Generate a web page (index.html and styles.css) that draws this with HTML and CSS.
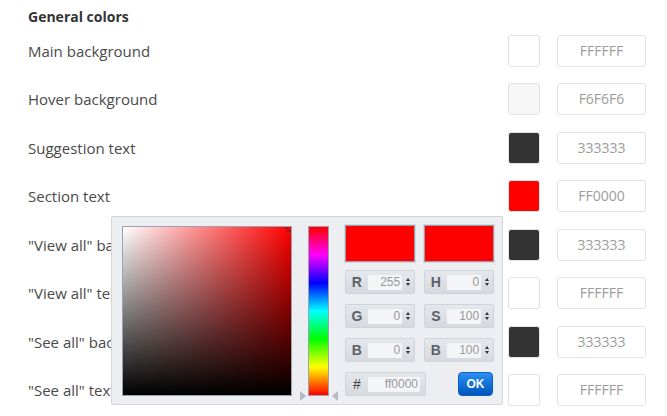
FILE: index.html
```html
<!DOCTYPE html>
<html lang="en">
<head>
<meta charset="utf-8">
<title>General colors</title>
<link rel="stylesheet" href="styles.css">
</head>
<body>
<div class="page">
  <h2 class="heading">General colors</h2>
  <div class="rows">
    <div class="row"><span class="label">Main background</span><span class="swatch" style="background:#FFFFFF"></span><span class="hex">FFFFFF</span></div>
    <div class="row"><span class="label">Hover background</span><span class="swatch" style="background:#F6F6F6"></span><span class="hex">F6F6F6</span></div>
    <div class="row"><span class="label">Suggestion text</span><span class="swatch" style="background:#333333"></span><span class="hex">333333</span></div>
    <div class="row"><span class="label">Section text</span><span class="swatch" style="background:#FF0000"></span><span class="hex">FF0000</span></div>
    <div class="row"><span class="label">"View all" background</span><span class="swatch" style="background:#333333"></span><span class="hex">333333</span></div>
    <div class="row"><span class="label">"View all" text</span><span class="swatch" style="background:#FFFFFF"></span><span class="hex">FFFFFF</span></div>
    <div class="row"><span class="label">"See all" background</span><span class="swatch" style="background:#333333"></span><span class="hex">333333</span></div>
    <div class="row"><span class="label">"See all" text</span><span class="swatch" style="background:#FFFFFF"></span><span class="hex">FFFFFF</span></div>
  </div>

  <div class="picker">
    <div class="sv">
      <span class="sv-handle"></span>
    </div>
    <div class="hue-wrap">
      <div class="hue"></div>
      <span class="arrow arrow-left"></span>
      <span class="arrow arrow-right"></span>
    </div>
    <div class="panel">
      <div class="previews">
        <div class="preview"></div>
        <div class="preview"></div>
      </div>
      <div class="fields">
        <div class="field"><span class="fl">R</span><span class="fv">255</span><span class="spin"><i class="up"></i><i class="down"></i></span></div>
        <div class="field"><span class="fl">H</span><span class="fv">0</span><span class="spin"><i class="up"></i><i class="down"></i></span></div>
        <div class="field"><span class="fl">G</span><span class="fv">0</span><span class="spin"><i class="up"></i><i class="down"></i></span></div>
        <div class="field"><span class="fl">S</span><span class="fv">100</span><span class="spin"><i class="up"></i><i class="down"></i></span></div>
        <div class="field"><span class="fl">B</span><span class="fv">0</span><span class="spin"><i class="up"></i><i class="down"></i></span></div>
        <div class="field"><span class="fl">B</span><span class="fv">100</span><span class="spin"><i class="up"></i><i class="down"></i></span></div>
      </div>
      <div class="bottom">
        <div class="field hexfield"><span class="fl">#</span><span class="fv hexv">ff0000</span></div>
        <button class="ok">OK</button>
      </div>
    </div>
  </div>
</div>
</body>
</html>
```
FILE: styles.css
```css
html, body {
  margin: 0;
  padding: 0;
  background: #ffffff;
}
.page {
  position: relative;
  width: 667px;
  height: 416px;
  overflow: hidden;
  box-sizing: border-box;
  padding: 7px 21px 0 28px;
  font-family: "Open Sans", "Noto Sans", sans-serif;
  color: #444;
}
.heading {
  margin: 0 0 8px 0;
  font-size: 14px;
  line-height: 20px;
  font-weight: 700;
  color: #333;
}
.rows {
  display: flex;
  flex-direction: column;
  gap: 16.43px;
}
.row {
  display: flex;
  align-items: center;
  height: 32px;
}
.label {
  flex: 1;
  font-size: 15px;
  color: #4a4a4a;
  white-space: nowrap;
}
.swatch {
  width: 30px;
  height: 30px;
  border: 1px solid #e3e3e3;
  border-radius: 3px;
  margin-right: 17px;
}
.hex {
  box-sizing: border-box;
  width: 89px;
  height: 32px;
  border: 1px solid #e3e3e3;
  border-radius: 3px;
  font-size: 14px;
  line-height: 30px;
  text-align: center;
  color: #9c9c9c;
}

/* picker */
.picker {
  position: absolute;
  left: 111px;
  top: 216px;
  width: 392px;
  height: 189px;
  box-sizing: border-box;
  background: #eceef1;
  border: 1px solid #d3d7dd;
  border-radius: 2px;
  padding: 9px 8px 9px 10px;
  display: flex;
  align-items: flex-start;
  font-family: "Liberation Sans", Arial, sans-serif;
}
.picker > * {
  flex-shrink: 0;
}
.sv {
  position: relative;
  width: 170px;
  height: 170px;
  box-sizing: border-box;
  border: 1px solid #9aa2ae;
  background: linear-gradient(to top, #000, rgba(0,0,0,0)), linear-gradient(to right, #fff, #f00);
  overflow: hidden;
}
.sv-handle {
  position: absolute;
  right: -5px;
  top: -5px;
  width: 8px;
  height: 8px;
  border: 1.5px solid #333;
  border-radius: 50%;
}
.hue-wrap {
  position: relative;
  width: 40px;
  height: 170px;
  margin-left: 7px;
}
.hue {
  position: absolute;
  left: 9px;
  top: 0;
  width: 21px;
  height: 170px;
  box-sizing: border-box;
  border: 1px solid #9aa2ae;
  background: linear-gradient(to bottom, #f00 0%, #f0f 16.67%, #00f 33.33%, #0ff 50%, #0f0 66.67%, #ff0 83.33%, #f00 100%);
}
.arrow {
  position: absolute;
  top: 165px;
  width: 0;
  height: 0;
  border-top: 5px solid transparent;
  border-bottom: 5px solid transparent;
}
.arrow-left {
  left: 1px;
  border-left: 6px solid #b3bac4;
}
.arrow-right {
  left: 33px;
  border-right: 6px solid #b3bac4;
}
.panel {
  margin-left: 6px;
  margin-top: -1px;
  width: 149px;
  display: flex;
  flex-direction: column;
}
.previews {
  display: flex;
  gap: 9px;
}
.preview {
  width: 70px;
  height: 37px;
  box-sizing: border-box;
  background: #f00;
  border: 1px solid #98a0ab;
  box-shadow: 0 0 0 1px #d5d9df;
}
.fields {
  margin-top: 8px;
  display: grid;
  grid-template-columns: 70px 70px;
  column-gap: 9px;
  row-gap: 10px;
}
.field {
  box-sizing: border-box;
  height: 24px;
  border: 1px solid #d0d4da;
  border-radius: 2px;
  background: linear-gradient(to bottom, #e4e7eb, #d6dadf);
  display: flex;
  align-items: center;
}
.fl {
  width: 22px;
  text-align: center;
  font-size: 14px;
  font-weight: 700;
  color: #5b6069;
}
.fv {
  box-sizing: border-box;
  width: 35px;
  height: 15px;
  background: #f4f5f7;
  font-size: 12px;
  line-height: 15px;
  text-align: right;
  padding-right: 2px;
  color: #999;
}
.spin {
  width: 12px;
  display: flex;
  flex-direction: column;
  align-items: center;
  gap: 2px;
}
.spin i {
  width: 0;
  height: 0;
  border-left: 2.5px solid transparent;
  border-right: 2.5px solid transparent;
}
.spin .up {
  border-bottom: 3px solid #333;
}
.spin .down {
  border-top: 3px solid #333;
}
.bottom {
  margin-top: 10px;
  display: flex;
  justify-content: space-between;
  align-items: center;
}
.hexfield {
  width: 81px;
}
.hexfield .fl {
  font-weight: 400;
  color: #444;
}
.hexv {
  width: 52px;
}
.ok {
  width: 35px;
  height: 24px;
  border: 1px solid #0a5fc0;
  border-radius: 4px;
  background: linear-gradient(to bottom, #2a8ef0, #0055bd);
  color: #fff;
  font-family: "Liberation Sans", Arial, sans-serif;
  font-size: 12px;
  font-weight: 700;
  padding: 0;
  margin-right: 1px;
}
```
